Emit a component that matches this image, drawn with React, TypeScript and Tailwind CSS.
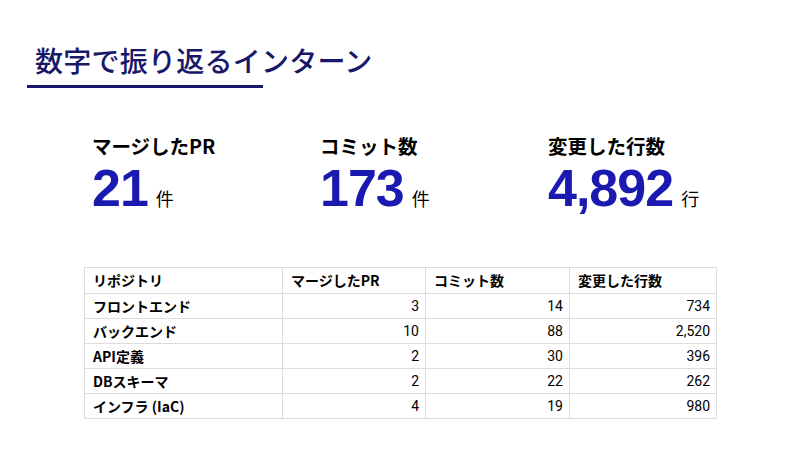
import React from "react";

const rows = [
  ["フロントエンド", "3", "14", "734"],
  ["バックエンド", "10", "88", "2,520"],
  ["API定義", "2", "30", "396"],
  ["DBスキーマ", "2", "22", "262"],
  ["インフラ (IaC)", "4", "19", "980"],
];

const jp = { fontFamily: '"Noto Sans CJK JP", "Noto Sans", sans-serif' };
const num = { fontFamily: '"Liberation Sans", Arial, sans-serif' };

function Stat({ label, value, unit }: { label: string; value: string; unit: string }) {
  return (
    <div className="w-[228px] flex flex-col">
      <div className="text-[19.5px] font-bold text-black leading-[24px]" style={jp}>{label}</div>
      <div className="flex items-baseline mt-[4px]">
        <span className="text-[52px] font-bold text-[#1a1ab0] leading-[52px] tracking-[-1px]" style={num}>{value}</span>
        <span className="text-[18px] text-black ml-[8px]" style={jp}>{unit}</span>
      </div>
    </div>
  );
}

export default function App() {
  return (
    <div className="w-[800px] h-[450px] bg-white relative overflow-hidden" style={jp}>
      <div className="pt-[41px] pl-[35px]">
        <div className="text-[28px] leading-[38px] text-[#18186a] font-medium tracking-[0.25px]" style={jp}>数字で振り返るインターン</div>
      </div>
      <div className="ml-[27px] mt-[6px] w-[236px] h-[3px] bg-[#18186a]" />
      <div className="flex pl-[92px] mt-[46px]">
        <Stat label="マージしたPR" value="21" unit="件" />
        <Stat label="コミット数" value="173" unit="件" />
        <Stat label="変更した行数" value="4,892" unit="行" />
      </div>
      <div className="ml-[84px] mt-[53px]">
        <table className="border-collapse text-[14px] text-black">
          <thead>
            <tr className="h-[26px]">
              <th className="w-[198px] border border-[#dcdcdc] text-left font-bold pl-[8px]">リポジトリ</th>
              <th className="w-[143px] border border-[#dcdcdc] text-left font-bold pl-[8px]">マージしたPR</th>
              <th className="w-[144px] border border-[#dcdcdc] text-left font-bold pl-[8px]">コミット数</th>
              <th className="w-[147px] border border-[#dcdcdc] text-left font-bold pl-[8px]">変更した行数</th>
            </tr>
          </thead>
          <tbody>
            {rows.map((r) => (
              <tr key={r[0]} className="h-[25px]">
                <td className="border border-[#dcdcdc] pl-[8px] font-bold">{r[0]}</td>
                <td className="border border-[#dcdcdc] pr-[6px] text-right" style={{ fontFamily: "Roboto, sans-serif" }}>{r[1]}</td>
                <td className="border border-[#dcdcdc] pr-[6px] text-right" style={{ fontFamily: "Roboto, sans-serif" }}>{r[2]}</td>
                <td className="border border-[#dcdcdc] pr-[6px] text-right" style={{ fontFamily: "Roboto, sans-serif" }}>{r[3]}</td>
              </tr>
            ))}
          </tbody>
        </table>
      </div>
    </div>
  );
}
